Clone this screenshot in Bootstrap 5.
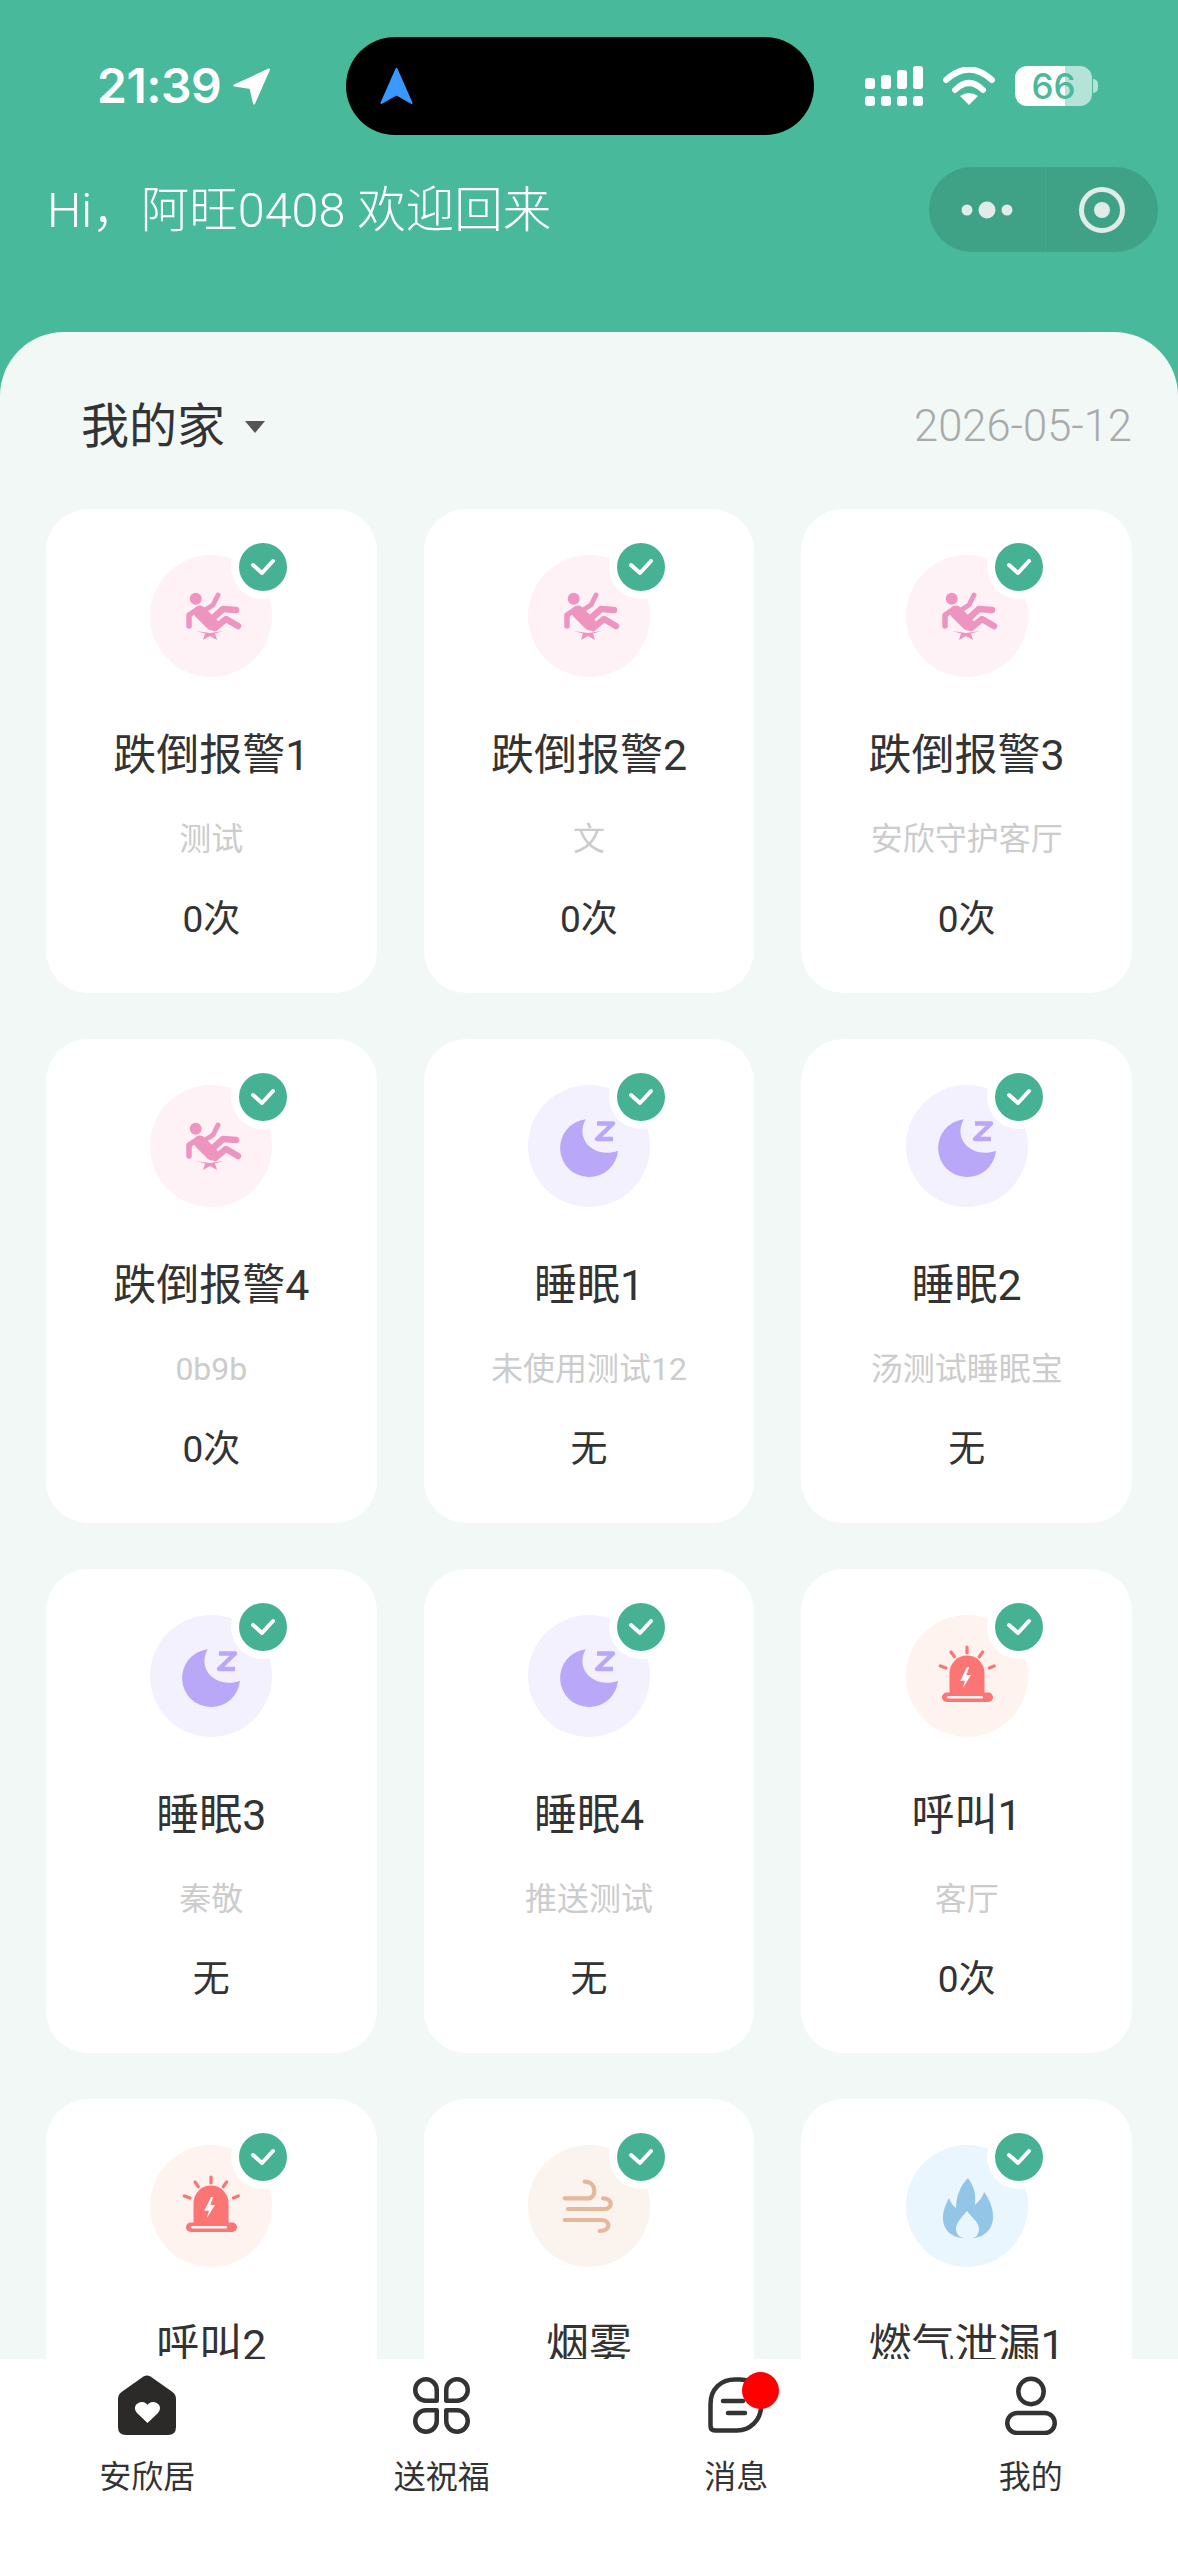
<!DOCTYPE html>
<html lang="zh">

<head>
    <meta charset="utf-8">
    <title>安欣居</title>
    <link rel="stylesheet" href="https://cdn.jsdelivr.net/npm/bootstrap@5.3.0/dist/css/bootstrap.min.css">
    <style>
        body {
            background: #48b99b;
            font-family: Roboto, "Noto Sans CJK SC", sans-serif;
            color: #333;
        }

        .app-shell {
            height: 100vh;
            overflow: hidden;
        }

        /* status bar */
        .status-strip {
            padding: 37px 20px 0 97px;
            height: 135px;
            color: #fff;
        }

        .clock-group {
            width: 249px;
            gap: 12px;
        }

        .clock-text {
            font: 600 48px/1 Inter, sans-serif;
            letter-spacing: -.5px;
        }

        .island {
            width: 468px;
            height: 98px;
            border-radius: 49px;
            background: #000;
            padding-left: 34px;
        }

        .status-icons {
            margin-left: 51px;
            gap: 20px;
        }

        .battery-body {
            width: 77px;
            height: 40px;
            border-radius: 12px;
            background: linear-gradient(90deg, #fff 65%, rgba(255, 255, 255, .6) 65%);
            color: #48b99b;
            font: 500 35px/40px Inter, sans-serif;
            text-align: center;
        }

        .battery-tip {
            width: 5px;
            height: 14px;
            margin-left: 1px;
            border-radius: 0 5px 5px 0;
            background: rgba(255, 255, 255, .6);
        }

        /* greeting */
        .greet-row {
            margin-top: 32px;
            padding: 0 20px 80px 47px;
            color: #fff;
        }

        .greet-text {
            height: 85px;
            font-size: 48.5px;
            font-weight: 300;
            line-height: 87px;
        }

        .capsule {
            width: 229px;
            height: 85px;
            border-radius: 43px;
            background: #3fa186;
        }

        .capsule-half {
            height: 100%;
        }

        .capsule-half:first-child {
            width: 117px;
            border-right: 1px solid #48a68d;
        }

        /* panel */
        .panel {
            background: #f2f8f6;
            border-radius: 64px 64px 0 0;
            padding: 65px 46px 0;
            min-height: 0;
        }

        .panel-head {
            height: 60px;
            margin-bottom: 52px;
            padding-left: 35px;
        }

        .home-name {
            font-size: 48px;
            line-height: 60px;
        }

        .home-caret {
            width: 0;
            height: 0;
            margin-left: 20px;
            border-style: solid;
            border-width: 12px 10.5px 0;
            border-color: #555 transparent transparent;
        }

        .today {
            font-size: 43.5px;
            color: #aaa;
            font-weight: 300;
        }

        .tile-grid {
            --bs-gutter-x: 47px;
            --bs-gutter-y: 46px;
        }

        .tile {
            height: 484px;
            padding-top: 46px;
            border-radius: 42px;
            background: #fff;
            text-align: center;
        }

        .tile-icon {
            width: 122px;
            height: 122px;
            margin: 0 auto;
            border-radius: 50%;
        }

        .tile-icon svg {
            display: block;
        }

        .tile-check {
            position: absolute;
            top: -12px;
            right: -15px;
            width: 48px;
            height: 48px;
            border-radius: 50%;
            background: #46b193;
            box-shadow: 0 0 0 8px #fff;
        }

        .tile-name {
            margin-top: 50px;
            font-size: 43px;
            line-height: 56px;
        }

        .tile-note {
            margin-top: 34px;
            font-size: 32px;
            line-height: 44px;
            color: #ccc;
        }

        .tile-count {
            margin-top: 37px;
            font-size: 37px;
            line-height: 44px;
        }

        /* tab bar */
        .tab-strip {
            height: 201px;
            padding-top: 16px;
            background: #fff;
        }

        .tab-cell {
            width: 25%;
            text-align: center;
        }

        .tab-glyph {
            height: 60px;
        }

        .tab-label {
            margin-top: 22px;
            font-size: 32px;
            line-height: 40px;
            color: #333;
        }

        .unread-dot {
            position: absolute;
            top: -3px;
            left: 34px;
            width: 37px;
            height: 37px;
            border-radius: 50%;
            background: #f00;
        }
    </style>
</head>

<body>
    <svg width="0" height="0" class="position-absolute">
        <defs>
            <symbol id="ic-fall" viewBox="0 0 122 122">
                <circle cx="45.7" cy="43.7" r="6" fill="#ee95bf" />
                <g fill="none" stroke="#ee95bf" stroke-linecap="round" stroke-linejoin="round">
                    <path d="M50 57L62 69" stroke-width="13" />
                    <path d="M55 55L63 50L68 40" stroke-width="5" />
                    <path d="M48 54L39 60L39 71" stroke-width="5.5" />
                    <path d="M63 63L73 54L86 55" stroke-width="6.5" />
                    <path d="M65 73L76 64L88 71" stroke-width="6.5" />
                </g>
                <path d="M46 76L55 78.5L53 85L60 81L67 85L65 78.5L74 76L60 78Z" fill="#ee95bf" />
            </symbol>
            <symbol id="ic-moon" viewBox="0 0 122 122">
                <path d="M57.7 34.3A29 29 0 1 0 90 65.7C68 74 46 56 57.7 34.3Z" fill="#b9a7f7" />
                <path d="M69 38.5H85L69 54H85" fill="none" stroke="#b9a7f7" stroke-width="4.5" stroke-linejoin="round" />
            </symbol>
            <symbol id="ic-alarm" viewBox="0 0 122 122">
                <path d="M43.5 78V58A17.5 17.5 0 0 1 78.5 58V78Z" fill="#fb7575" />
                <rect x="36" y="77.5" width="51" height="9.5" rx="4.7" fill="#fb7575" />
                <rect x="41" y="81" width="36" height="2.6" rx="1.3" fill="#fff3f0" />
                <path d="M61 32V38M45 37L48.3 41.7M76.7 37L73.3 41.7M34.3 51L40 53M88.3 51L83.3 53" stroke="#fb7575" stroke-width="3.2" stroke-linecap="round" />
                <path d="M61 52L54.3 65.7H59L56.7 73.3L65 60H60.3L63.3 52Z" fill="#fff" />
            </symbol>
            <symbol id="ic-wind" viewBox="0 0 122 122">
                <g fill="none" stroke="#e5b79c" stroke-width="4.2" stroke-linecap="round">
                    <path d="M36.7 53.3H60C69 53.3 69 36.7 56.7 36.7" />
                    <path d="M40 64H76.7C85 64 85 53.3 75 53.3" />
                    <path d="M36.7 75H73.3C83 75 83 86 71.7 86" />
                </g>
            </symbol>
            <symbol id="ic-flame" viewBox="0 0 122 122">
                <path d="M62 33C68 42 70 48 69 60C73 56 77 52 78 47C84 55 87 63 87 72C87 84 78 93 66 93H58C45 93 37 84 37 73C37 65 40 59 43 53C45 58 47 61 50 63C50 52 54 41 62 33Z" fill="#93c5e6" />
                <path d="M61 66C55 73 50 78 50 84C50 89 54 93 58 93H66C70 93 73 89 73 84C73 77 66 73 61 66Z" fill="#e9f6fe" />
            </symbol>
        </defs>
    </svg>

    <div class="app-shell d-flex flex-column">
        <div class="status-strip d-flex flex-shrink-0">
            <div class="clock-group d-flex align-items-center">
                <span class="clock-text">21:39</span>
                <svg width="38" height="37" viewBox="0 0 38 37">
                    <path d="M36 1.5L1.5 17.5L17.5 20L21 35.5Z" fill="#fff" stroke="#fff" stroke-width="2" stroke-linejoin="round" />
                </svg>
            </div>
            <div class="island d-flex align-items-center">
                <svg width="33" height="37" viewBox="0 0 33 37">
                    <path d="M16.5 1L31.5 35L16.5 26.5L1.5 35Z" fill="#3a98ff" stroke="#3a98ff" stroke-width="2" stroke-linejoin="round" />
                </svg>
            </div>
            <div class="status-icons d-flex align-items-center">
                <svg width="58" height="40" viewBox="0 0 58 40" fill="#fff">
                    <rect x="0" y="12" width="10" height="11" rx="3" />
                    <rect x="16" y="9" width="10" height="14" rx="3" />
                    <rect x="32" y="4" width="10" height="19" rx="3" />
                    <rect x="48" y="0" width="10" height="23" rx="3" />
                    <rect x="0" y="30" width="10" height="10" rx="3" />
                    <rect x="16" y="30" width="10" height="10" rx="3" />
                    <rect x="32" y="30" width="10" height="10" rx="3" />
                    <rect x="48" y="30" width="10" height="10" rx="3" />
                </svg>
                <svg width="52" height="38" viewBox="0 0 52 38">
                    <path d="M3 13Q26 -8 49 13M12 23Q26 9 40 23" fill="none" stroke="#fff" stroke-width="6" stroke-linecap="round" />
                    <path d="M17 29Q26 23 35 29L26 38Z" fill="#fff" />
                </svg>
                <div class="d-flex align-items-center">
                    <div class="battery-body">66</div>
                    <div class="battery-tip"></div>
                </div>
            </div>
        </div>

        <div class="greet-row d-flex justify-content-between flex-shrink-0">
            <div class="greet-text">Hi，阿旺0408 欢迎回来</div>
            <div class="capsule d-flex">
                <div class="capsule-half d-flex align-items-center justify-content-center">
                    <svg width="58" height="24" viewBox="0 0 58 24" fill="#e0ece8">
                        <circle cx="9" cy="12" r="5.5" />
                        <circle cx="29" cy="12" r="8.5" />
                        <circle cx="49" cy="12" r="5.5" />
                    </svg>
                </div>
                <div class="capsule-half flex-grow-1 d-flex align-items-center justify-content-center">
                    <svg width="48" height="48" viewBox="0 0 48 48">
                        <circle cx="24" cy="24" r="20.5" fill="none" stroke="#e0ece8" stroke-width="5" />
                        <circle cx="24" cy="24" r="8" fill="#e0ece8" />
                    </svg>
                </div>
            </div>
        </div>

        <main class="panel flex-grow-1 overflow-hidden">
            <div class="panel-head d-flex align-items-center justify-content-between">
                <div class="d-flex align-items-center">
                    <span class="home-name">我的家</span>
                    <span class="home-caret"></span>
                </div>
                <span class="today">2026-05-12</span>
            </div>
            <div class="row row-cols-3 tile-grid" id="tileGrid"></div>
        </main>

        <nav class="tab-strip d-flex flex-shrink-0">
            <div class="tab-cell">
                <div class="tab-glyph">
                    <svg width="58" height="60" viewBox="0 0 58 60">
                        <path d="M25.5 1.5Q29 -.5 32.5 1.5L54.5 17Q58 19.5 58 24V52Q58 60 50 60H8Q0 60 0 52V24Q0 19.5 3.5 17Z" fill="#2b2a29" />
                        <path d="M29.5 48L19 38C14 32 19 27 24 27C27 27 29 29 29.5 30C30 29 32 27 35 27C40 27 45 32 40 38Z" fill="#fff" />
                    </svg>
                </div>
                <div class="tab-label">安欣居</div>
            </div>
            <div class="tab-cell">
                <div class="tab-glyph">
                    <svg width="57" height="60" viewBox="0 0 57 60">
                        <g transform="translate(0 2)" fill="none" stroke="#333" stroke-width="4.5" stroke-linejoin="round">
                            <path d="M23.75 23.75H13A10.75 10.75 0 1 1 23.75 13Z" />
                            <path d="M23.75 23.75H13A10.75 10.75 0 1 1 23.75 13Z" transform="rotate(90 28.5 28.5)" />
                            <path d="M23.75 23.75H13A10.75 10.75 0 1 1 23.75 13Z" transform="rotate(180 28.5 28.5)" />
                            <path d="M23.75 23.75H13A10.75 10.75 0 1 1 23.75 13Z" transform="rotate(270 28.5 28.5)" />
                        </g>
                    </svg>
                </div>
                <div class="tab-label">送祝福</div>
            </div>
            <div class="tab-cell">
                <div class="tab-glyph">
                    <span class="d-inline-block position-relative">
                        <svg class="d-block" width="56" height="60" viewBox="0 0 56 60">
                            <g transform="translate(0 2)" fill="none" stroke="#333" stroke-width="4.5" stroke-linecap="round" stroke-linejoin="round">
                                <path d="M2.5 27C2.5 12 13 2.5 27 2.5H32Q53 2.5 53 30A24 24 0 0 1 29 53.5H7Q2.5 53.5 2.5 49Z" />
                                <path d="M15 24H35M20 36H37" />
                            </g>
                        </svg>
                        <span class="unread-dot"></span>
                    </span>
                </div>
                <div class="tab-label">消息</div>
            </div>
            <div class="tab-cell">
                <div class="tab-glyph">
                    <svg width="52" height="60" viewBox="0 0 52 60" fill="none" stroke="#333" stroke-width="4.5">
                        <circle cx="26" cy="16.5" r="12.7" />
                        <rect x="2.25" y="38" width="47.5" height="20" rx="10" />
                    </svg>
                </div>
                <div class="tab-label">我的</div>
            </div>
        </nav>
    </div>

    <script src="https://cdn.jsdelivr.net/npm/bootstrap@5.3.0/dist/js/bootstrap.bundle.min.js"></script>
    <script>
        const iconTint = {
            fall: "#fef2f7",
            moon: "#f3f1fe",
            alarm: "#fff3f0",
            wind: "#fbf3ee",
            flame: "#e9f6fe"
        };

        const tiles = [
            ["fall", "跌倒报警1", "测试", "0次"],
            ["fall", "跌倒报警2", "文", "0次"],
            ["fall", "跌倒报警3", "安欣守护客厅", "0次"],
            ["fall", "跌倒报警4", "0b9b", "0次"],
            ["moon", "睡眠1", "未使用测试12", "无"],
            ["moon", "睡眠2", "汤测试睡眠宝", "无"],
            ["moon", "睡眠3", "秦敬", "无"],
            ["moon", "睡眠4", "推送测试", "无"],
            ["alarm", "呼叫1", "客厅", "0次"],
            ["alarm", "呼叫2", "", ""],
            ["wind", "烟雾", "", ""],
            ["flame", "燃气泄漏1", "", ""]
        ];

        document.getElementById("tileGrid").innerHTML = tiles.map(([icon, name, note, count]) => `
            <div class="col">
                <div class="tile">
                    <div class="tile-icon position-relative" style="background:${iconTint[icon]}">
                        <svg width="122" height="122"><use href="#ic-${icon}" /></svg>
                        <span class="tile-check d-flex align-items-center justify-content-center">
                            <svg width="26" height="20" viewBox="0 0 26 20">
                                <path d="M3 8L12 16L23 4" fill="none" stroke="#fff" stroke-width="4" stroke-linecap="round" stroke-linejoin="round" />
                            </svg>
                        </span>
                    </div>
                    <div class="tile-name">${name}</div>
                    <div class="tile-note">${note}</div>
                    <div class="tile-count">${count}</div>
                </div>
            </div>`).join("");
    </script>
</body>

</html>
